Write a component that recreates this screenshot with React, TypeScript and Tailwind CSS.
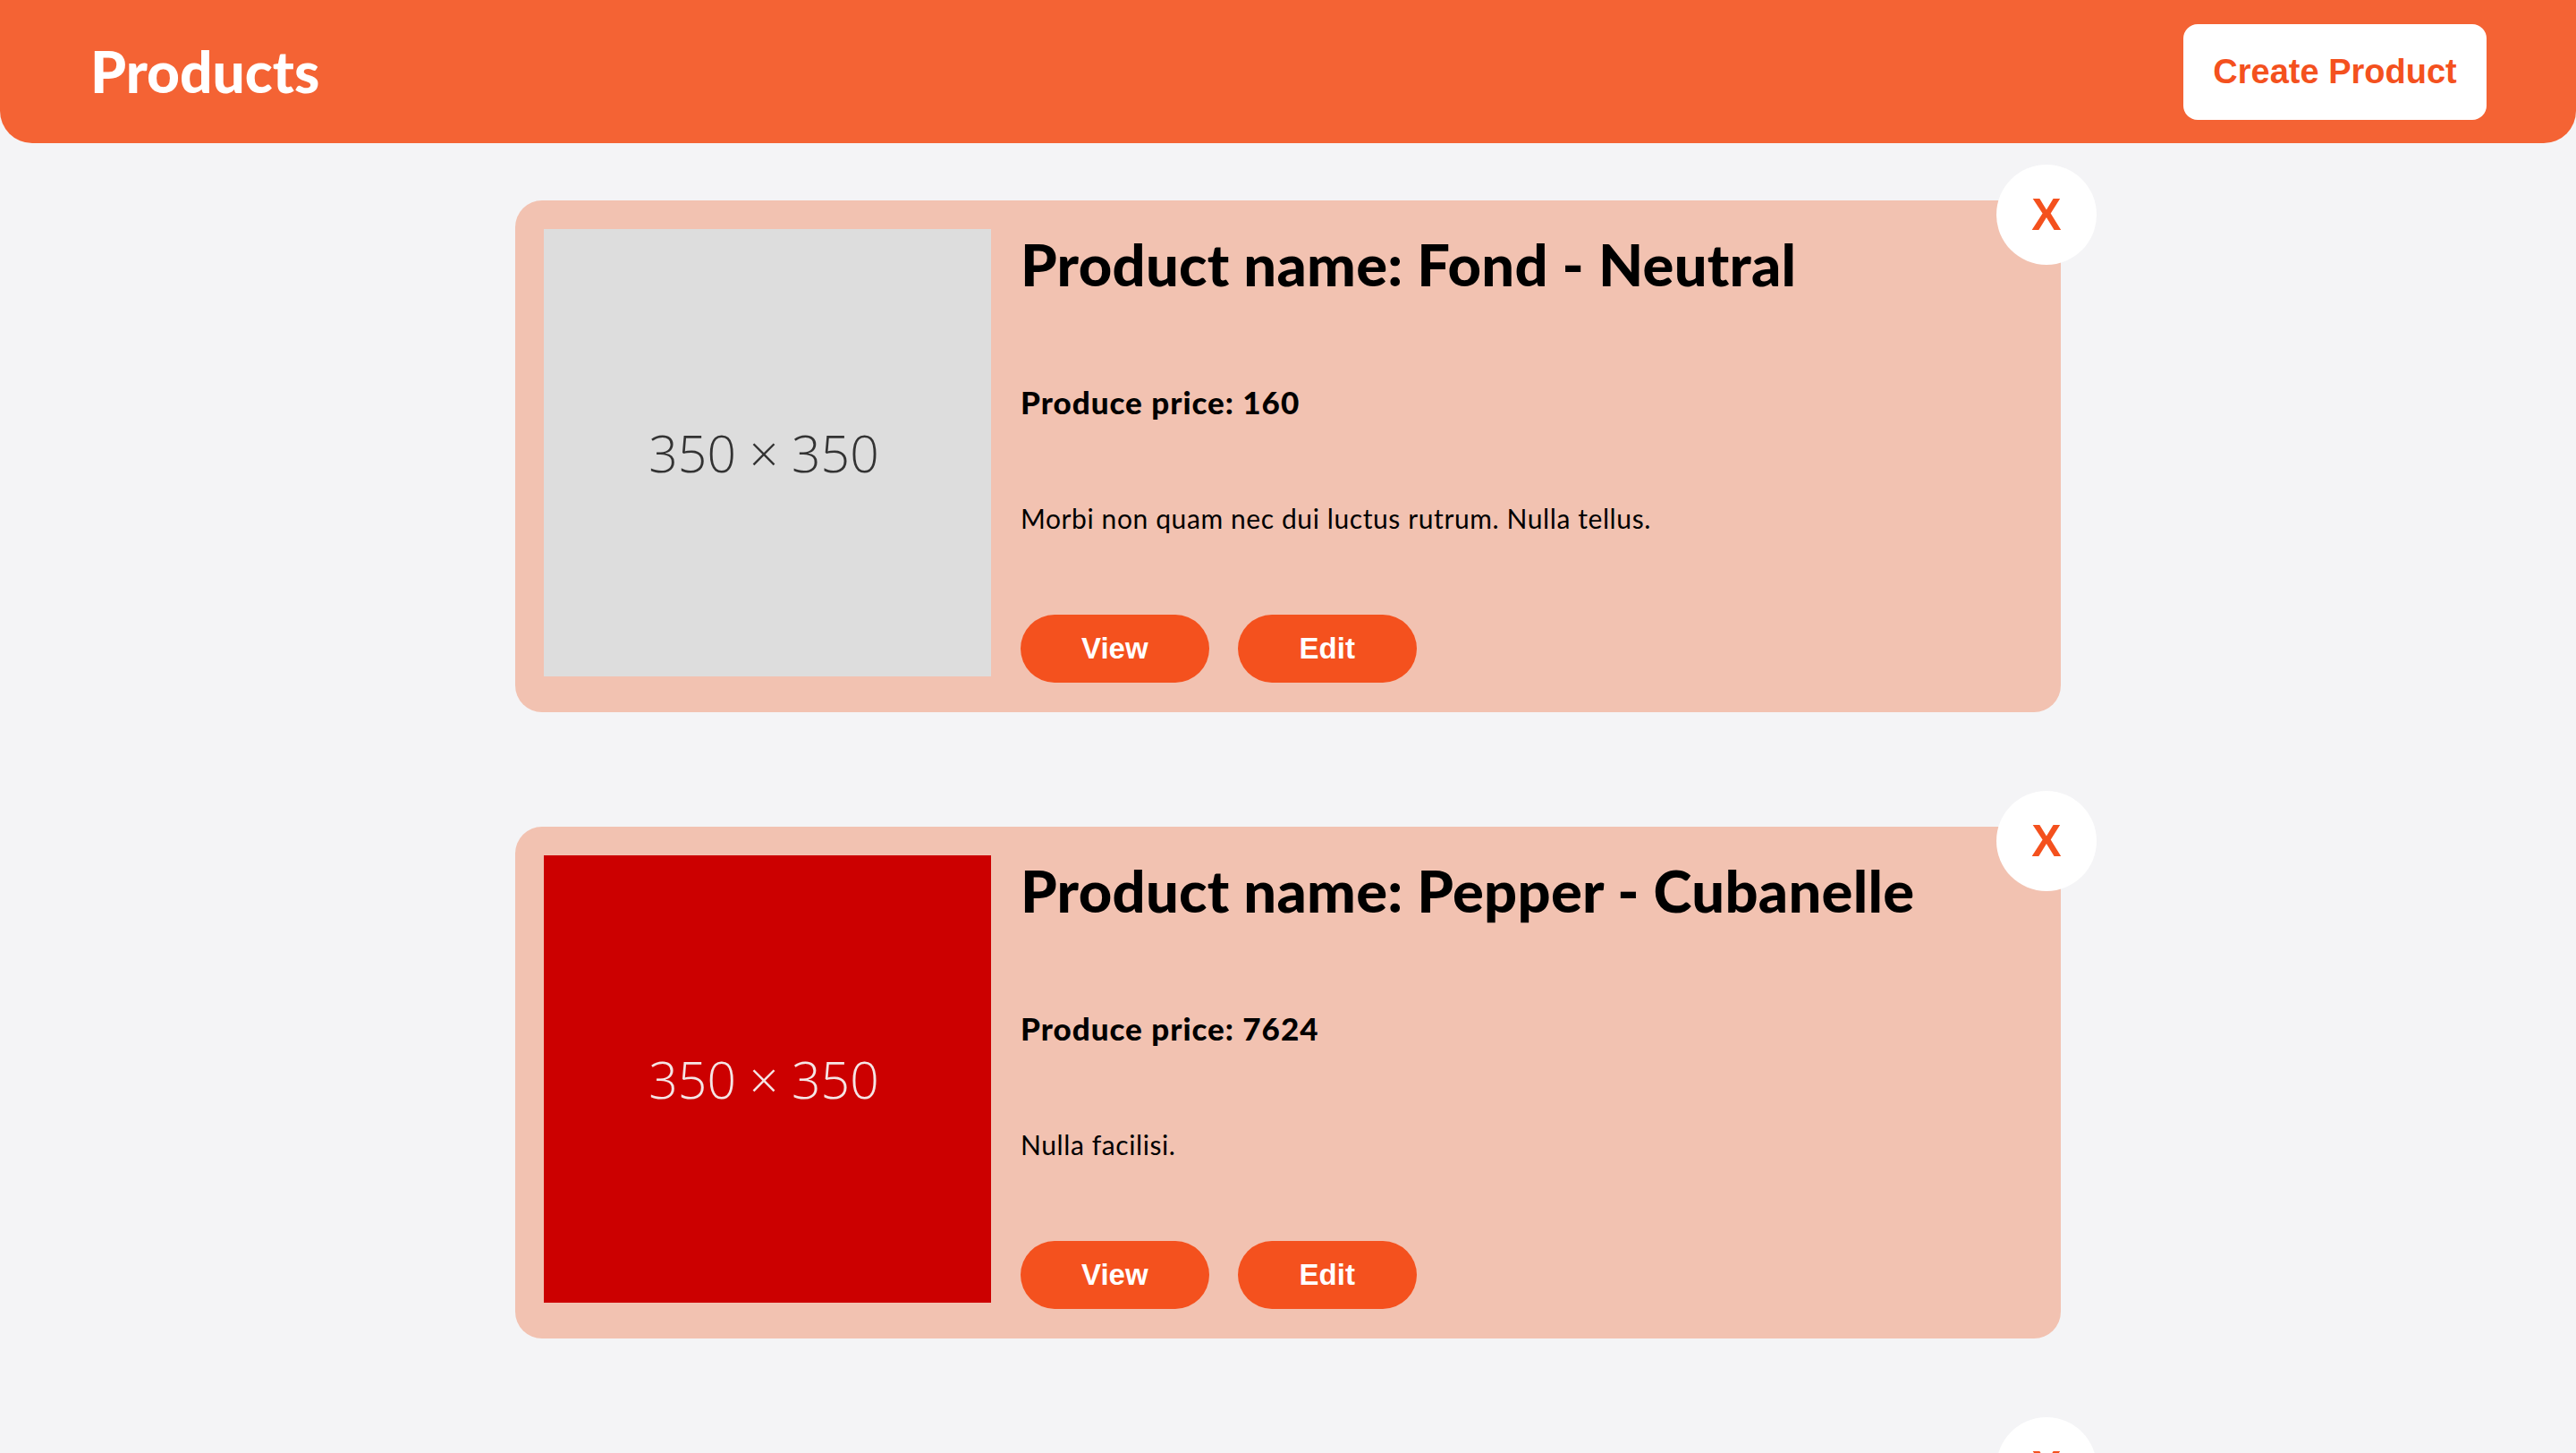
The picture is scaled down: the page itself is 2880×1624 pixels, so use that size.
import React from 'react';

type Product = {
    id: number;
    name: string;
    price: number;
    description: string;
    imageBg: string;
    imageText: string;
};

const products: Product[] = [
    {
        id: 1,
        name: 'Fond - Neutral',
        price: 160,
        description: 'Morbi non quam nec dui luctus rutrum. Nulla tellus.',
        imageBg: 'bg-[#dddddd]',
        imageText: 'text-[#333333]',
    },
    {
        id: 2,
        name: 'Pepper - Cubanelle',
        price: 7624,
        description: 'Nulla facilisi.',
        imageBg: 'bg-[#cc0000]',
        imageText: 'text-[#f5e6e6]',
    },
    {
        id: 3,
        name: 'Wine - Red, Cooking',
        price: 512,
        description: 'Praesent blandit lacinia erat.',
        imageBg: 'bg-[#dddddd]',
        imageText: 'text-[#333333]',
    },
];

function ProductCard({ product }: { product: Product }) {
    return (
        <div className="relative w-[1728px] flex gap-[33px] pt-8 px-8 pb-[33px] rounded-[30px] bg-[#f2c2b1]">
            <div
                className={`w-[500px] h-[500px] shrink-0 flex items-center justify-center ${product.imageBg}`}
            >
                <span
                    className={`pr-2 text-[57px] font-light leading-none ${product.imageText}`}
                    style={{ fontFamily: '"Open Sans", "Noto Sans", sans-serif' }}
                >
                    350 × 350
                </span>
            </div>

            <div className="flex flex-col font-['Lato',sans-serif] text-black">
                <h2 className="mt-[7px] text-[65px] leading-[64px] font-black tracking-[0.3px]">
                    Product name: {product.name}
                </h2>
                <p className="mt-[106px] text-[35px] leading-[33px] font-black tracking-[1px]">
                    Produce price: {product.price}
                </p>
                <p className="mt-[99px] text-[30px] leading-[28px] tracking-[0.6px]">
                    {product.description}
                </p>

                <div className="mt-[94px] flex gap-8 font-['Liberation_Sans',Arial,sans-serif]">
                    <button className="h-[76px] px-[68px] rounded-full bg-[#f4511e] text-white text-[33px] font-bold">
                        View
                    </button>
                    <button className="h-[76px] px-[69px] rounded-full bg-[#f4511e] text-white text-[33px] font-bold">
                        Edit
                    </button>
                </div>
            </div>

            <button className="absolute -top-10 -right-10 w-28 h-28 rounded-full bg-white flex items-center justify-center text-[#f4511e] text-[50px] font-bold font-['Liberation_Sans',Arial,sans-serif]">
                X
            </button>
        </div>
    );
}

export default function App() {
    return (
        <div className="min-h-screen bg-[#f4f4f6]">
            <header className="h-[160px] bg-[#f46334] rounded-b-[36px] flex items-center justify-between pl-[101px] pr-[100px]">
                <h1 className="text-white text-[64px] font-black font-['Lato',sans-serif] leading-none">
                    Products
                </h1>
                <button className="h-[107px] w-[339px] rounded-[16px] bg-white text-[#f4511e] text-[38px] font-bold font-['Liberation_Sans',Arial,sans-serif]">
                    Create Product
                </button>
            </header>

            <main className="flex flex-col items-center gap-[128px] pt-16 pb-16">
                {products.map((p) => (
                    <ProductCard key={p.id} product={p} />
                ))}
            </main>
        </div>
    );
}
